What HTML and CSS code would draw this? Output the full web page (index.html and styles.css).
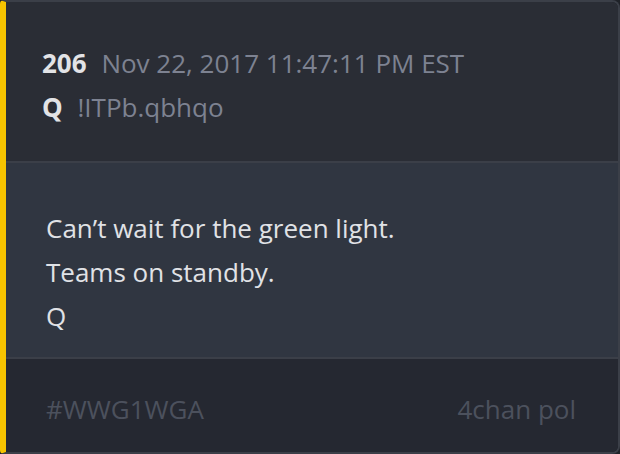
FILE: index.html
```html
<!DOCTYPE html>
<html lang="en">
<head>
    <meta charset="UTF-8">
    <title>Post 206</title>
    <link rel="stylesheet" href="styles.css">
</head>
<body>
    <div class="post">
        <div class="post-header">
            <div class="post-line">
                <span class="post-num">206</span>
                <span class="post-date">Nov 22, 2017 11:47:11 PM EST</span>
            </div>
            <div class="post-line">
                <span class="post-author">Q</span>
                <span class="post-trip">!ITPb.qbhqo</span>
            </div>
        </div>
        <div class="post-body">
            <p>Can’t wait for the green light.</p>
            <p>Teams on standby.</p>
            <p>Q</p>
        </div>
        <div class="post-footer">
            <span>#WWG1WGA</span>
            <span>4chan pol</span>
        </div>
    </div>
</body>
</html>
```

FILE: styles.css
```css
html, body {
    margin: 0;
    background: #1f2228;
}
body {
    font-family: "Open Sans", "DejaVu Sans", sans-serif;
    font-size: 26px;
    line-height: 44px;
}
.post {
    height: 454px;
    box-sizing: border-box;
    border: 2px solid #3b3f48;
    border-left: 6px solid #f7c400;
    border-radius: 4px 8px 8px 4px;
    overflow: hidden;
    display: flex;
    flex-direction: column;
}
.post-header {
    background: #2a2d35;
    padding: 39px 36px 32px;
    border-bottom: 2px solid #3b3f48;
}
.post-num, .post-author {
    font-weight: bold;
    color: #e2e3e6;
    margin-right: 8px;
}
.post-date, .post-trip {
    color: #7d8291;
}
.post-body {
    background: #303641;
    color: #e0e2e6;
    padding: 43px 40px 19px;
    border-bottom: 2px solid #3b3f48;
}
.post-body p {
    margin: 0;
}
.post-footer {
    flex: 1;
    background: #252831;
    color: #4c515d;
    padding: 28px 42px 0 40px;
    display: flex;
    justify-content: space-between;
}
```
